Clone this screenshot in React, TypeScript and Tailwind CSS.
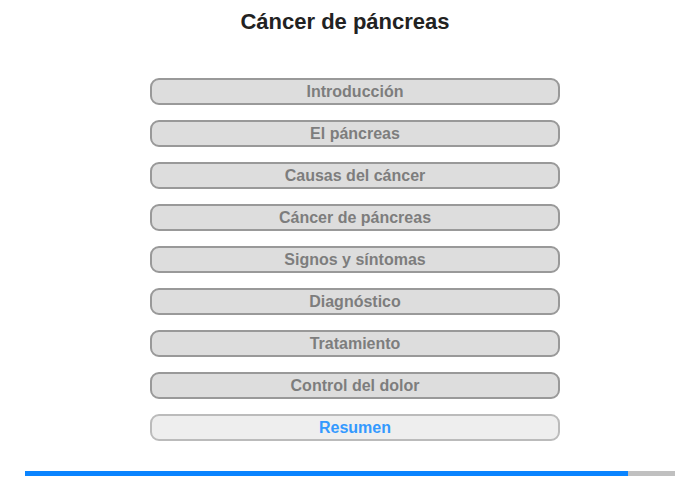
import React from "react";

const items = [
  "Introducción",
  "El páncreas",
  "Causas del cáncer",
  "Cáncer de páncreas",
  "Signos y síntomas",
  "Diagnóstico",
  "Tratamiento",
  "Control del dolor",
];

export default function App() {
  return (
    <div
      className="w-[700px] h-[480px] bg-white flex flex-col items-center"
      style={{ fontFamily: '"Liberation Sans", Arial, sans-serif' }}
    >
      <h1 className="mt-[9px] mr-[10px] text-[22px] leading-[26px] font-bold text-[#222222]">
        Cáncer de páncreas
      </h1>
      <div className="mt-[43px] ml-[10px] flex flex-col gap-[15px] w-[410px]">
        {items.map((t) => (
          <div
            key={t}
            className="h-[27px] rounded-[9px] border-2 border-[#999999] bg-[#dddddd] flex items-center justify-center text-[16px] font-bold text-[#7d7d7d]"
          >
            {t}
          </div>
        ))}
        <div className="h-[27px] rounded-[9px] border-2 border-[#bbbbbb] bg-[#eeeeee] flex items-center justify-center text-[16px] font-bold text-[#3399ff]">
          Resumen
        </div>
      </div>
      <div className="mt-[30px] w-[650px] h-[5px] bg-[#c0c0c0] flex">
        <div className="w-[603px] h-full bg-[#0a84ff]" />
      </div>
    </div>
  );
}
